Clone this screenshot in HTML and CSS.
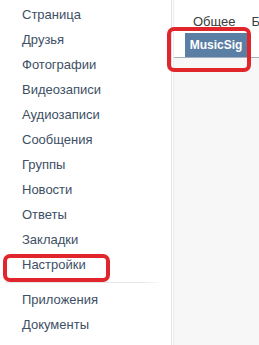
FILE: index.html
```html
<!DOCTYPE html>
<html lang="ru">
<head>
    <meta charset="UTF-8">
    <meta name="viewport" content="width=device-width, initial-scale=1.0">
    <title>Настройки</title>
    <link rel="stylesheet" href="styles.css">
</head>
<body>
    <div class="page">
        <!-- Left menu -->
        <div class="sidebar">
            <ul class="menu">
                <li>Страница</li>
                <li>Друзья</li>
                <li>Фотографии</li>
                <li>Видеозаписи</li>
                <li>Аудиозаписи</li>
                <li>Сообщения</li>
                <li>Группы</li>
                <li>Новости</li>
                <li>Ответы</li>
                <li>Закладки</li>
                <li>Настройки</li>
            </ul>
            <div class="divider"></div>
            <ul class="menu">
                <li>Приложения</li>
                <li>Документы</li>
            </ul>
        </div>

        <!-- Settings content -->
        <div class="content">
            <div class="tabs">
                <div class="tab-row">
                    <span class="tab">Общее</span>
                    <span class="tab">Б</span>
                </div>
                <div class="tab-row">
                    <span class="tab active">MusicSig</span>
                </div>
            </div>
        </div>
    </div>

    <!-- Highlight marks -->
    <div class="mark mark-settings"></div>
    <div class="mark mark-tab"></div>
</body>
</html>
```

FILE: styles.css
```css
body {
    font-family: "Liberation Sans", Arial, sans-serif;
    margin: 0;
    background-color: #fff;
    overflow: hidden;
}

.page {
    display: flex;
    height: 345px;
}

.sidebar {
    flex-shrink: 0;
    width: 171px;
    border-right: 1px solid #e2e3e6;
    padding-top: 2px;
    background: #fff;
}

.menu {
    list-style: none;
    margin: 0;
    padding: 0;
}

.menu li {
    height: 25px;
    line-height: 25px;
    padding-left: 22px;
    font-size: 13px;
    color: #3d4f64;
}

.divider {
    height: 1px;
    margin: 5px 6px 4px 5px;
    background: linear-gradient(to right, #e4e6ea 85%, rgba(228, 230, 234, 0));
}

.content {
    flex: 1;
    min-width: 0;
    margin-left: 1px;
    border-left: 1px solid #ececec;
    background: #f7f7f7;
    overflow: hidden;
}

.tabs {
    background: #fff;
    border-bottom: 1px solid #a3aebb;
    padding: 14px 0 0 11px;
    white-space: nowrap;
}

.tab-row {
    display: flex;
}

.tab {
    flex-shrink: 0;
    font-size: 13px;
    color: #3b3b3b;
    line-height: 16px;
    padding: 0 8px;
}

.tab-row + .tab-row {
    margin-top: 3px;
}

.tab.active {
    background: #5b7ea4;
    color: #fff;
    font-weight: bold;
    font-size: 12px;
    line-height: 24px;
    width: 62px;
    padding: 0;
    text-align: center;
}

.mark {
    position: absolute;
    border: 4px solid #e0262b;
    border-radius: 7px;
    box-sizing: border-box;
}

.mark-settings {
    left: 3px;
    top: 254px;
    width: 107px;
    height: 28px;
}

.mark-tab {
    left: 167px;
    top: 27px;
    width: 84px;
    height: 45px;
}
```
